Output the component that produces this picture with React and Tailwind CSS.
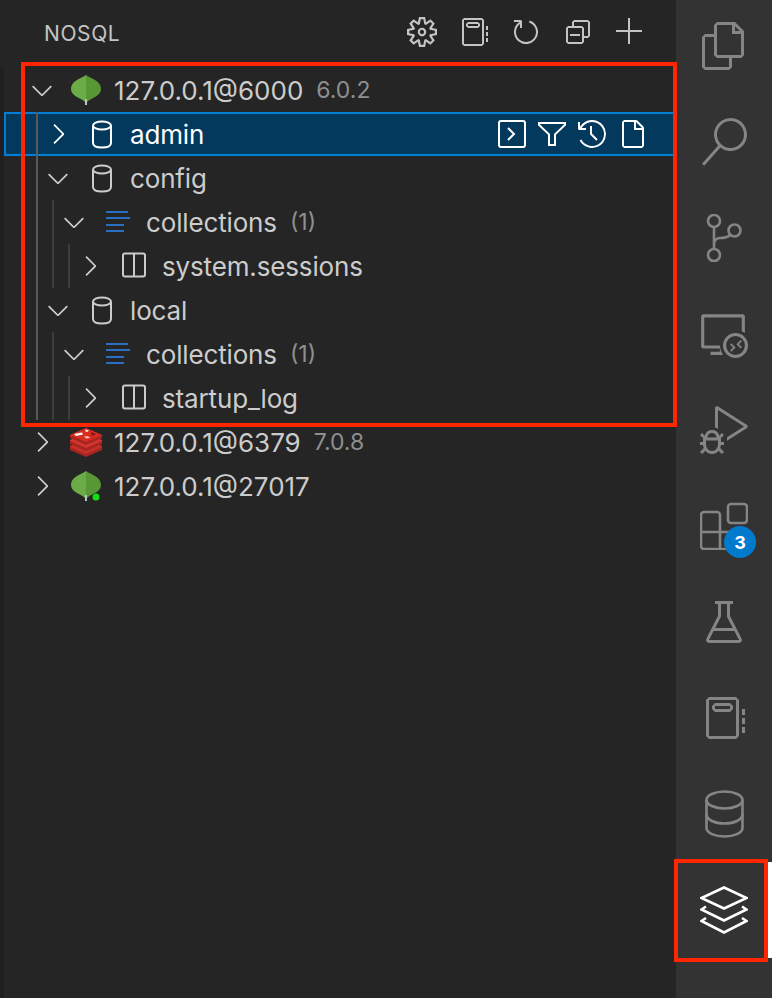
import React from "react";
import {
  VscSettingsGear,
  VscNotebook,
  VscRefresh,
  VscCollapseAll,
  VscAdd,
  VscFiles,
  VscSearch,
  VscRemoteExplorer,
  VscDebugAlt,
  VscBeaker,
  VscChevronRight,
  VscChevronDown,
  VscFilter,
  VscHistory,
  VscFile,
} from "react-icons/vsc";

const INDENT = {
  0: "pl-[22px]",
  1: "pl-[38px]",
  2: "pl-[54px]",
  3: "pl-[70px]",
};

function Leaf({ online }) {
  return (
    <svg width="32" height="32" viewBox="0 0 32 32">
      <path d="M16 1 C10 5 1 7 1 15 C1 22 11 24 15 28 L16 28 Z" fill="#6cac48" />
      <path d="M16 1 C22 5 31 7 31 15 C31 22 21 24 17 28 L16 28 Z" fill="#599636" />
      <rect x="15" y="25" width="2" height="6" fill="#b8c4c2" />
      {online && <circle cx="26" cy="27" r="3.5" fill="#12e012" />}
    </svg>
  );
}

function Redis() {
  return (
    <svg width="32" height="32" viewBox="0 0 32 32">
      <path d="M0 21 L16 14 L32 21 V24 L16 31 L0 24 Z" fill="#a82520" />
      <path d="M0 21 L16 28 L32 21 L32 20 L16 13 L0 20 Z" fill="#c6302b" />
      <path d="M0 15 L16 8 L32 15 V18 L16 25 L0 18 Z" fill="#a82520" />
      <path d="M0 15 L16 22 L32 15 L32 14 L16 7 L0 14 Z" fill="#d3352f" />
      <path d="M0 9 L16 2 L32 9 V12 L16 19 L0 12 Z" fill="#a82520" />
      <path d="M0 9 L16 16 L32 9 L16 2 Z" fill="#d82c20" />
      <path d="M4 8 L12 6.5 L13 8.5 L6 10 Z" fill="#ffffff" />
      <path d="M16 3.5 L19 4.5 L17 6 L15 5 Z" fill="#ffffff" />
      <path d="M14 10.5 L18 10 L20 12 L16 12.5 Z" fill="#f4b8b4" />
      <path d="M21 6 L26 8 L22 10 Z" fill="#7a1a16" />
    </svg>
  );
}

function Cylinder() {
  return (
    <svg width="32" height="32" viewBox="0 0 32 32" fill="none" stroke="currentColor" strokeWidth="2">
      <ellipse cx="16" cy="7.5" rx="9" ry="4" />
      <path d="M7 7.5 V25 C7 28 11 29.5 16 29.5 C21 29.5 25 28 25 25 V7.5" />
    </svg>
  );
}

function ListIcon() {
  return (
    <svg width="32" height="32" viewBox="0 0 32 32" fill="#2b6fc2">
      <rect x="4" y="5" width="22" height="2" />
      <rect x="4" y="11" width="24" height="2" />
      <rect x="4" y="18" width="18" height="2" />
      <rect x="4" y="24" width="18" height="2" />
    </svg>
  );
}

function TableIcon() {
  return (
    <svg width="32" height="32" viewBox="0 0 32 32" fill="none" stroke="currentColor" strokeWidth="2">
      <rect x="5" y="3.5" width="22" height="23" rx="2" />
      <path d="M16 3.5 V26.5" />
    </svg>
  );
}

function TermBox() {
  return (
    <svg width="32" height="32" viewBox="0 0 32 32" fill="none" stroke="currentColor" strokeWidth="2">
      <rect x="3" y="3" width="26" height="26" rx="2" />
      <path d="M12 10 L18 16 L12 22" />
    </svg>
  );
}

function SourceControl() {
  return (
    <svg width="48" height="48" viewBox="0 0 48 48" fill="none" stroke="currentColor" strokeWidth="2.6">
      <circle cx="14" cy="7" r="6" />
      <circle cx="34.5" cy="16.5" r="6" />
      <circle cx="14" cy="41" r="6" />
      <path d="M14 13 V35" />
      <path d="M30 21 C27 24 24 24 20 24 C17 24 14 26 14 30" />
    </svg>
  );
}

function Extensions() {
  return (
    <svg width="48" height="48" viewBox="0 0 48 48" fill="none" stroke="currentColor" strokeWidth="2.6">
      <rect x="28" y="2" width="19" height="19" rx="3" />
      <path d="M4 10 H17 A3 3 0 0 1 20 13 V30 H37 A3 3 0 0 1 40 33 V44 A3 3 0 0 1 37 47 H4 A3 3 0 0 1 1 44 V13 A3 3 0 0 1 4 10 Z" />
      <path d="M1 30 H20 V47" />
    </svg>
  );
}

function DbStack() {
  return (
    <svg width="48" height="48" viewBox="0 0 48 48" fill="none" stroke="currentColor" strokeWidth="2.6">
      <ellipse cx="24.5" cy="10" rx="18" ry="8.5" />
      <path d="M6.5 10 V38 C6.5 43 15 46.5 24.5 46.5 C34 46.5 42.5 43 42.5 38 V10" />
      <path d="M6.5 24 C6.5 30 15 33.5 24.5 33.5 C34 33.5 42.5 30 42.5 24" />
    </svg>
  );
}

function Layers() {
  return (
    <svg width="48" height="48" viewBox="0 0 48 48" fill="none" stroke="currentColor" strokeWidth="2.6">
      <path d="M24 1.5 L46.5 12 L24 22.5 L1.5 12 Z" />
      <path d="M6 20.5 L1.5 23.5 L24 34.5 L46.5 23.5 L42 20.5" />
      <path d="M6 32 L1.5 35 L24 46.5 L46.5 35 L42 32" />
    </svg>
  );
}

function Row({ depth, open, icon, label, desc, selected, actions }) {
  const Chevron = open ? VscChevronDown : VscChevronRight;
  return (
    <div
      className={`flex items-center h-[44px] ${INDENT[depth]} ${
        selected
          ? "bg-[#04395e] text-white outline-2 -outline-offset-2 outline-[#007fd4]"
          : "text-[#cccccc]"
      }`}
    >
      <Chevron size={32} className="shrink-0" />
      <span className="w-8 h-8 ml-3 mr-3 shrink-0">{icon}</span>
      <span className={`pt-[1px] text-[26px] whitespace-nowrap ${depth > 0 ? "tracking-[-0.15px]" : ""}`}>{label}</span>
      {desc && <span className="pt-[1px] ml-[13px] text-[23px] text-[#8f8f8f] whitespace-nowrap">{desc}</span>}
      {actions && (
        <div className="ml-auto mr-[28px] flex items-center gap-2 text-white">
          <TermBox />
          <VscFilter size={32} />
          <VscHistory size={32} />
          <VscFile size={32} />
        </div>
      )}
    </div>
  );
}

function Group({ guide, children }) {
  return (
    <div className="relative">
      {children}
      <div className={`absolute top-0 bottom-0 w-[2px] ${guide}`} />
    </div>
  );
}

const ACTIVITY = [
  <VscFiles size={48} />,
  <VscSearch size={48} />,
  <SourceControl />,
  <VscRemoteExplorer size={48} />,
  <VscDebugAlt size={48} />,
  <Extensions />,
  <VscBeaker size={48} />,
  <VscNotebook size={48} />,
  <DbStack />,
];

export default function App() {
  return (
    <div className="relative flex h-[998px] w-[772px] overflow-hidden bg-[#252525] font-['Inter','Liberation_Sans',sans-serif]">
      {/* sidebar */}
      <div className="flex-1 flex flex-col min-w-0">
        <div className="h-[68px] shrink-0 flex items-center pl-[44px] pr-[30px] text-[#c4c4c4]">
          <span className="text-[21px] tracking-[0.6px]">NOSQL</span>
          <div className="ml-auto flex items-center gap-5 -mt-[4px]">
            <VscSettingsGear size={30} className="mx-[1px]" />
            <VscNotebook size={32} />
            <VscRefresh size={32} />
            <VscCollapseAll size={32} />
            <VscAdd size={32} />
          </div>
        </div>
        <div className="flex flex-1">
          <div className="w-1 bg-[#1f1f1f] shrink-0" />
          <div className="flex-1 min-w-0">
            <Row depth={0} open icon={<Leaf />} label="127.0.0.1@6000" desc="6.0.2" />
            <Group guide="left-[32px] bg-[#5a5a5a]">
              <Row depth={1} selected icon={<Cylinder />} label="admin" actions />
              <Row depth={1} open icon={<Cylinder />} label="config" />
              <Group guide="left-[48px] bg-[#3d3d3d]">
                <Row depth={2} open icon={<ListIcon />} label="collections" desc="(1)" />
                <Group guide="left-[64px] bg-[#3d3d3d]">
                  <Row depth={3} icon={<TableIcon />} label="system.sessions" />
                </Group>
              </Group>
              <Row depth={1} open icon={<Cylinder />} label="local" />
              <Group guide="left-[48px] bg-[#3d3d3d]">
                <Row depth={2} open icon={<ListIcon />} label="collections" desc="(1)" />
                <Group guide="left-[64px] bg-[#3d3d3d]">
                  <Row depth={3} icon={<TableIcon />} label="startup_log" />
                </Group>
              </Group>
            </Group>
            <Row depth={0} icon={<Redis />} label="127.0.0.1@6379" desc="7.0.8" />
            <Row depth={0} icon={<Leaf online />} label="127.0.0.1@27017" />
          </div>
        </div>
      </div>

      {/* activity bar */}
      <div className="w-[96px] shrink-0 bg-[#333333] flex flex-col text-[#858585]">
        <div className="-mt-[2px]">
          {ACTIVITY.map((icon, i) => (
            <div key={i} className="relative h-[96px] flex items-center justify-center">
              {icon}
              {i === 5 && (
                <span className="absolute left-[48px] top-[48px] w-8 h-8 rounded-full bg-[#007acc] text-white text-[18px] font-bold flex items-center justify-center">
                  3
                </span>
              )}
            </div>
          ))}
          <div className="relative h-[96px] flex items-center justify-center text-white">
            <Layers />
            <div className="absolute right-0 top-0 bottom-0 w-1 bg-white" />
          </div>
        </div>
      </div>

      {/* red annotation boxes */}
      <div className="absolute left-[21px] top-[62px] w-[656px] h-[365px] border-4 border-[#ff2600] pointer-events-none" />
      <div className="absolute left-[674px] top-[859px] w-[94px] h-[103px] border-4 border-[#ff2600] pointer-events-none" />
    </div>
  );
}
